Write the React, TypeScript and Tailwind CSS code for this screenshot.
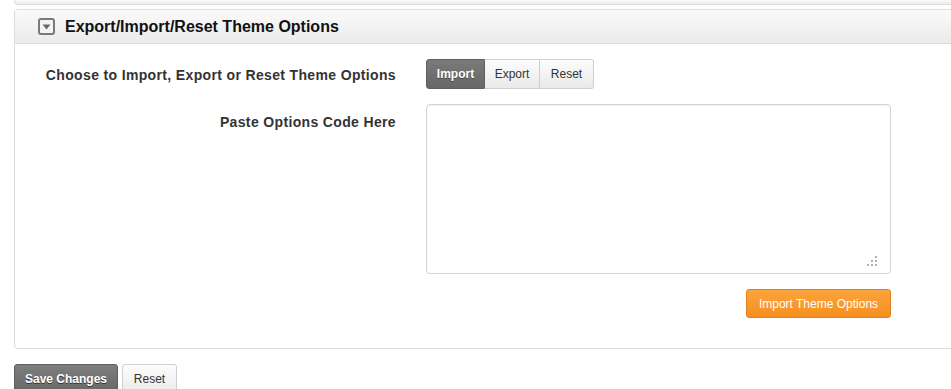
import React from "react";

const dots =
  "bg-[linear-gradient(to_bottom,#fafafa,#ebebeb)]";

export default function App() {
  return (
    <div className="w-[951px] h-[389px] overflow-hidden bg-white font-['Liberation_Sans',Arial,sans-serif] text-[#333]">
      <div className="pl-[14px]">
        {/* previous panel bottom */}
        <div className={`h-[5px] w-[960px] border-x border-b border-[#dcdcdc] rounded-b-[4px] ${dots}`} />
        {/* main panel */}
        <div className="mt-[4px] w-[960px] border border-[#dcdcdc] rounded-[4px]">
          <div className={`h-[34px] flex items-center border-b border-[#dcdcdc] rounded-t-[4px] ${dots} pl-[23px]`}>
            <div className="w-[17px] h-[17px] border-2 border-[#7a7a7a] rounded-[3px] bg-[#f4f4f4] flex items-center justify-center">
              <svg width="9" height="6" viewBox="0 0 9 6">
                <path d="M0.5 0.5 L8.5 0.5 L4.5 5.5 Z" fill="#6a6a6a" />
              </svg>
            </div>
            <div className="ml-[10px] text-[16px] font-bold text-[#111]">
              Export/Import/Reset Theme Options
            </div>
          </div>
          <div className="pt-[15px] pb-[30px]">
            <div className="flex items-center">
              <div className="w-[381px] text-right text-[14px] tracking-[0.35px] font-bold text-[#333] pt-[3px]">
                Choose to Import, Export or Reset Theme Options
              </div>
              <div className="ml-[30px] flex h-[30px] text-[12px]">
                <div className="w-[59px] flex items-center justify-center bg-[linear-gradient(to_bottom,#7a7a7a,#666)] border border-[#5f5f5f] rounded-l-[3px] text-white font-bold [text-shadow:0_1px_0_#444]">
                  Import
                </div>
                <div className="w-[55px] flex items-center justify-center bg-[linear-gradient(to_bottom,#fdfdfd,#e9e9e9)] border-y border-r border-[#cfcfcf] text-[#333]">
                  Export
                </div>
                <div className="w-[54px] flex items-center justify-center bg-[linear-gradient(to_bottom,#fdfdfd,#e9e9e9)] border-y border-r border-[#cfcfcf] rounded-r-[3px] text-[#333]">
                  Reset
                </div>
              </div>
            </div>
            <div className="flex mt-[15px]">
              <div className="w-[381px] text-right text-[14px] tracking-[0.35px] font-bold text-[#333] pt-[8px]">
                Paste Options Code Here
              </div>
              <div className="ml-[30px] w-[465px]">
                <div className="relative h-[170px] border border-[#d4d4d4] rounded-[4px] bg-white shadow-[inset_0_1px_2px_rgba(0,0,0,0.07)]">
                  <svg className="absolute right-[12px] bottom-[6px]" width="12" height="12" viewBox="0 0 12 12">
                    <rect x="9" y="1" width="2" height="2" fill="#b0b0b0" />
                    <rect x="5" y="5" width="2" height="2" fill="#b0b0b0" />
                    <rect x="9" y="5" width="2" height="2" fill="#b0b0b0" />
                    <rect x="1" y="9" width="2" height="2" fill="#b0b0b0" />
                    <rect x="5" y="9" width="2" height="2" fill="#b0b0b0" />
                    <rect x="9" y="9" width="2" height="2" fill="#b0b0b0" />
                  </svg>
                </div>
                <div className="flex justify-end mt-[15px]">
                  <div className="h-[29px] w-[145px] flex items-center justify-center rounded-[3px] border border-[#e0801c] bg-[linear-gradient(to_bottom,#fca43c,#f58f1f)] text-white text-[12px]">
                    Import Theme Options
                  </div>
                </div>
              </div>
            </div>
          </div>
        </div>
        {/* bottom buttons */}
        <div className="mt-[15px] flex gap-[4px] text-[12px]">
          <div className="h-[30px] w-[104px] flex items-center justify-center rounded-t-[3px] border border-[#5f5f5f] bg-[linear-gradient(to_bottom,#7e7e7e,#676767)] text-white font-bold [text-shadow:0_1px_0_#333]">
            Save Changes
          </div>
          <div className="h-[30px] w-[55px] flex items-center justify-center rounded-t-[3px] border border-[#cfcfcf] bg-[linear-gradient(to_bottom,#fdfdfd,#ebebeb)] text-[#333]">
            Reset
          </div>
        </div>
      </div>
    </div>
  );
}
